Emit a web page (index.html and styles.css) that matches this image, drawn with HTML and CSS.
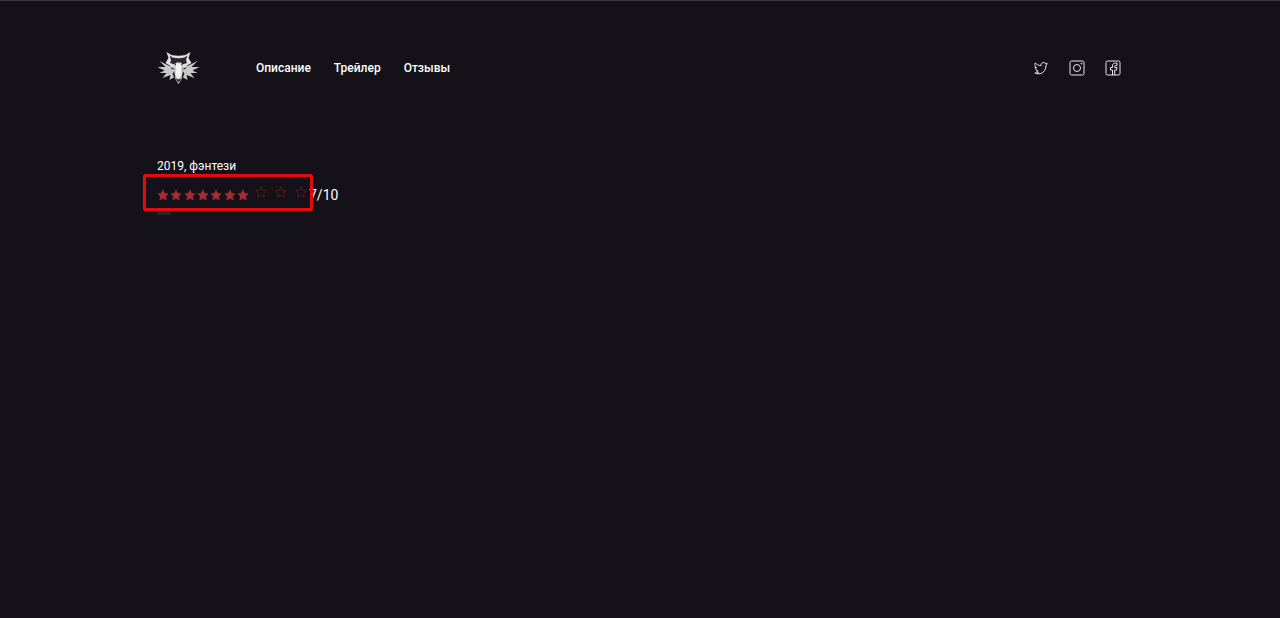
FILE: index.html
```
<!DOCTYPE html>
<html lang="ru">
<head>
    <meta charset="UTF-8">
    <meta name="viewport" content="width=device-width, initial-scale=1.0">
    <title>Ведьмак</title>
    <link rel="stylesheet" href="styles.css">
</head>
<body>
    <svg class="sprite" aria-hidden="true">
        <symbol id="star" viewBox="0 0 24 24">
            <path d="M12 1.5l3.2 6.8 7.4 1-5.4 5.2 1.4 7.4-6.6-3.6-6.6 3.6 1.4-7.4-5.4-5.2 7.4-1z"/>
        </symbol>
    </svg>

    <div class="container">
        <header class="header">
            <a href="#" class="logo" aria-label="Ведьмак">
                <svg viewBox="0 0 42 32">
                    <path class="fur" d="M12 14L2 9l6 6-8 0 7 3.500-5 2.500 7 0-4 5 8-3-1 5 5-3 2 4 2 3 2-3 2-4 5 3-1-5 8 3-4-5 7 0-5-2.500 7-3.500-8 0 6-6-10 5-5-1h-8z"/>
                    <path class="ears" d="M9 0l5 3q7 1.500 14 0l5-3-2 6 3 5-7 4-3-3h-6l-3 3-7-4 3-5z"/>
                    <path class="shade" d="M12 3.500l3 2q6 1.500 12 0l3-2-1.500 4.500 1 3-4.500 1.500-2-2h-4l-2 2-4.500-1.500 1-3zM13 15l5 2.500-4-.5zM29 15l-5 2.500 4-.5zM16.500 19l1.500 6-1 1-2-4zM25.500 19l-1.500 6 1 1 2-4zM18.500 26.500l2.500 1 2.500-1-1 2.500-1.500 1-1.500-1z"/>
                    <path class="snout" d="M18.500 12h5l.5 11-2 3h-2l-2-3z"/>
                </svg>
            </a>
            <nav class="nav">
                <a href="#description">Описание</a>
                <a href="#trailer">Трейлер</a>
                <a href="#reviews">Отзывы</a>
            </nav>
            <div class="social">
                <a href="#" aria-label="Twitter">
                    <svg viewBox="0 0 16 16">
                        <path d="M14.200 3.500l-1.600.2C12 2.300 9.800 2.100 8.700 3.300c-.6.700-.7 1.500-.6 2.300C5.600 5.700 3.700 4.600 2.300 2.900c-.9 2.100-.2 3.800 1.300 5l-1.600-.4c.2 1.600 1.200 2.500 2.600 3l-1.200.2c.4 1 1.100 1.400 2.100 1.600-1.100.7-2.300.9-3.600.7 4.200 2 10.900.5 11.100-7.500z"/>
                    </svg>
                </a>
                <a href="#" aria-label="Instagram">
                    <svg viewBox="0 0 16 16">
                        <rect x="1" y="1" width="14" height="14" rx="1.500"/>
                        <circle cx="8" cy="8" r="3.500"/>
                        <circle cx="12.500" cy="3.500" r=".5"/>
                    </svg>
                </a>
                <a href="#" aria-label="Facebook">
                    <svg viewBox="0 0 16 16">
                        <rect x="1" y="1" width="14" height="14" rx="1.500"/>
                        <path d="M7.500 15V10H5.500V7.500h2V6c0-2 1-3 3-3h1.500v2.500h-1.500c-.5 0-.8.300-.8.800v1.200H12L11.500 10H9.700v5"/>
                    </svg>
                </a>
            </div>
        </header>

        <main class="info">
            <p class="genre">2019, фэнтези</p>
            <div class="rating">
                <div class="stars">
                    <svg><use href="#star"/></svg>
                    <svg><use href="#star"/></svg>
                    <svg><use href="#star"/></svg>
                    <svg><use href="#star"/></svg>
                    <svg><use href="#star"/></svg>
                    <svg><use href="#star"/></svg>
                    <svg><use href="#star"/></svg>
                </div>
                <div class="stars stars-empty">
                    <svg><use href="#star"/></svg>
                    <svg><use href="#star"/></svg>
                    <svg><use href="#star"/></svg>
                </div>
                <span class="score">7/10</span>
                <div class="highlight"></div>
            </div>
            <div class="dash"></div>
        </main>
    </div>
</body>
</html>
```
FILE: styles.css
```
body {
    margin: 0;
    border-top: 1px solid #38373b;
    background-color: #141118;
    color: #fff;
    font-family: Roboto, sans-serif;
    font-size: 12px;
    line-height: 16px;
}

.sprite {
    position: absolute;
    width: 0;
    height: 0;
}

.container {
    max-width: 966px;
    margin: 0 auto;
}

.header {
    display: flex;
    align-items: center;
    padding-top: 51px;
}

.logo svg {
    display: block;
    width: 43px;
    height: 32px;
}

.fur {
    fill: #c9c9c9;
}

.ears {
    fill: #e2e2e2;
}

.shade {
    fill: #2b292e;
}

.snout {
    fill: #f2f2f2;
}

.nav {
    display: flex;
    gap: 23px;
    margin-left: 56px;
}

.nav a {
    color: #fff;
    font-weight: 500;
    text-decoration: none;
}

.social {
    display: flex;
    gap: 20px;
    margin-left: auto;
    padding-right: 2px;
}

.social svg {
    display: block;
    width: 16px;
    height: 16px;
    fill: none;
    stroke: #e8e8e8;
    stroke-linejoin: round;
}

.info {
    padding-top: 74px;
}

.genre {
    margin: 0;
}

.rating {
    display: flex;
    align-items: center;
    position: relative;
    margin-top: 11px;
    line-height: 20px;
}

.score {
    font-size: 14px;
}

.stars {
    display: flex;
    justify-content: space-between;
    width: 92px;
}

.stars svg {
    width: 12px;
    height: 12px;
    fill: #a72d31;
    stroke: #a72d31;
    stroke-width: 1px;
    stroke-linejoin: round;
}

.stars-empty {
    width: 52px;
    margin: 0 2px 6px 6px;
}

.stars-empty svg {
    fill: none;
    stroke: #5a1a20;
    stroke-width: 2px;
}

/* red frame around the stars */
.highlight {
    position: absolute;
    top: -11px;
    left: -14px;
    width: 164px;
    height: 31px;
    border: 3px solid #e30b0f;
    border-radius: 2px;
}

.dash {
    width: 14px;
    height: 4px;
    margin-top: 6px;
    border-radius: 1px;
    background-color: #29272b;
}
```
